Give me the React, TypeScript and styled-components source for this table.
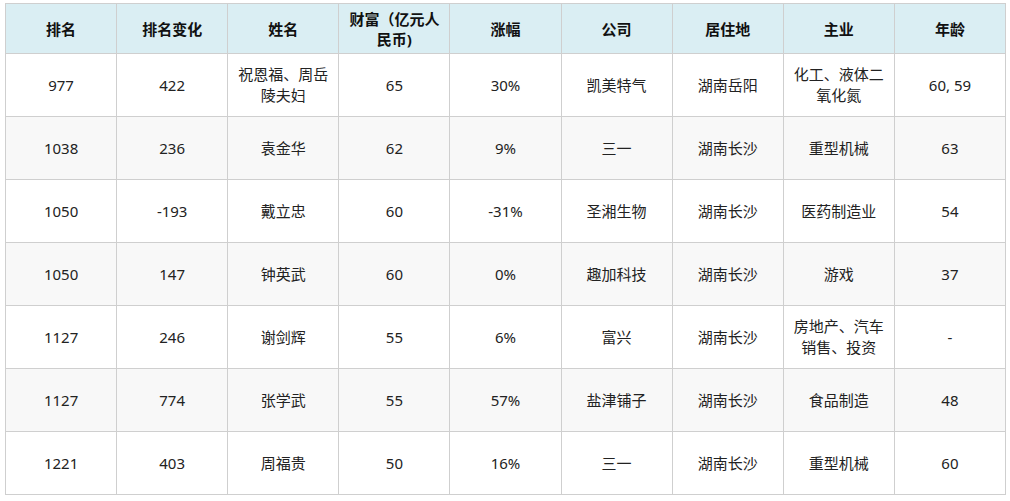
import React from "react";
import styled, { createGlobalStyle } from "styled-components";

const Global = createGlobalStyle`
  html, body { margin: 0; padding: 0; background: #fff; }
  body { font-family: "Noto Sans", "Noto Sans CJK SC", sans-serif; }
`;

const Wrap = styled.div`
  padding: 3px 0 0 5px;
`;

const Table = styled.table`
  border-collapse: collapse;
  width: 1001px;
  table-layout: fixed;
  font-size: 15px;
  color: #222;
`;

const Th = styled.th`
  background: #daeef3;
  border: 1px solid #cfcfcf;
  height: 49px;
  padding: 0 6px;
  font-weight: bold;
  color: #111;
  line-height: 20px;
  text-align: center;
  vertical-align: middle;
`;

const Row = styled.tr<{ $alt: boolean }>`
  background: ${(p) => (p.$alt ? "#f8f8f8" : "#ffffff")};
`;

const Td = styled.td`
  border: 1px solid #cfcfcf;
  height: 62px;
  padding: 0 6px;
  text-align: center;
  vertical-align: middle;
  line-height: 21px;
`;

const headers = ["排名", "排名变化", "姓名", "财富（亿元人民币)", "涨幅", "公司", "居住地", "主业", "年龄"];

const rows: string[][] = [
  ["977", "422", "祝恩福、周岳陵夫妇", "65", "30%", "凯美特气", "湖南岳阳", "化工、液体二氧化氮", "60, 59"],
  ["1038", "236", "袁金华", "62", "9%", "三一", "湖南长沙", "重型机械", "63"],
  ["1050", "-193", "戴立忠", "60", "-31%", "圣湘生物", "湖南长沙", "医药制造业", "54"],
  ["1050", "147", "钟英武", "60", "0%", "趣加科技", "湖南长沙", "游戏", "37"],
  ["1127", "246", "谢剑辉", "55", "6%", "富兴", "湖南长沙", "房地产、汽车销售、投资", "-"],
  ["1127", "774", "张学武", "55", "57%", "盐津铺子", "湖南长沙", "食品制造", "48"],
  ["1221", "403", "周福贵", "50", "16%", "三一", "湖南长沙", "重型机械", "60"],
];

export default function App() {
  return (
    <>
      <Global />
      <Wrap>
        <Table>
          <thead>
            <tr>
              {headers.map((h) => (
                <Th key={h}>{h}</Th>
              ))}
            </tr>
          </thead>
          <tbody>
            {rows.map((r, i) => (
              <Row key={i} $alt={i % 2 === 1}>
                {r.map((c, j) => (
                  <Td key={j}>{c}</Td>
                ))}
              </Row>
            ))}
          </tbody>
        </Table>
      </Wrap>
    </>
  );
}
